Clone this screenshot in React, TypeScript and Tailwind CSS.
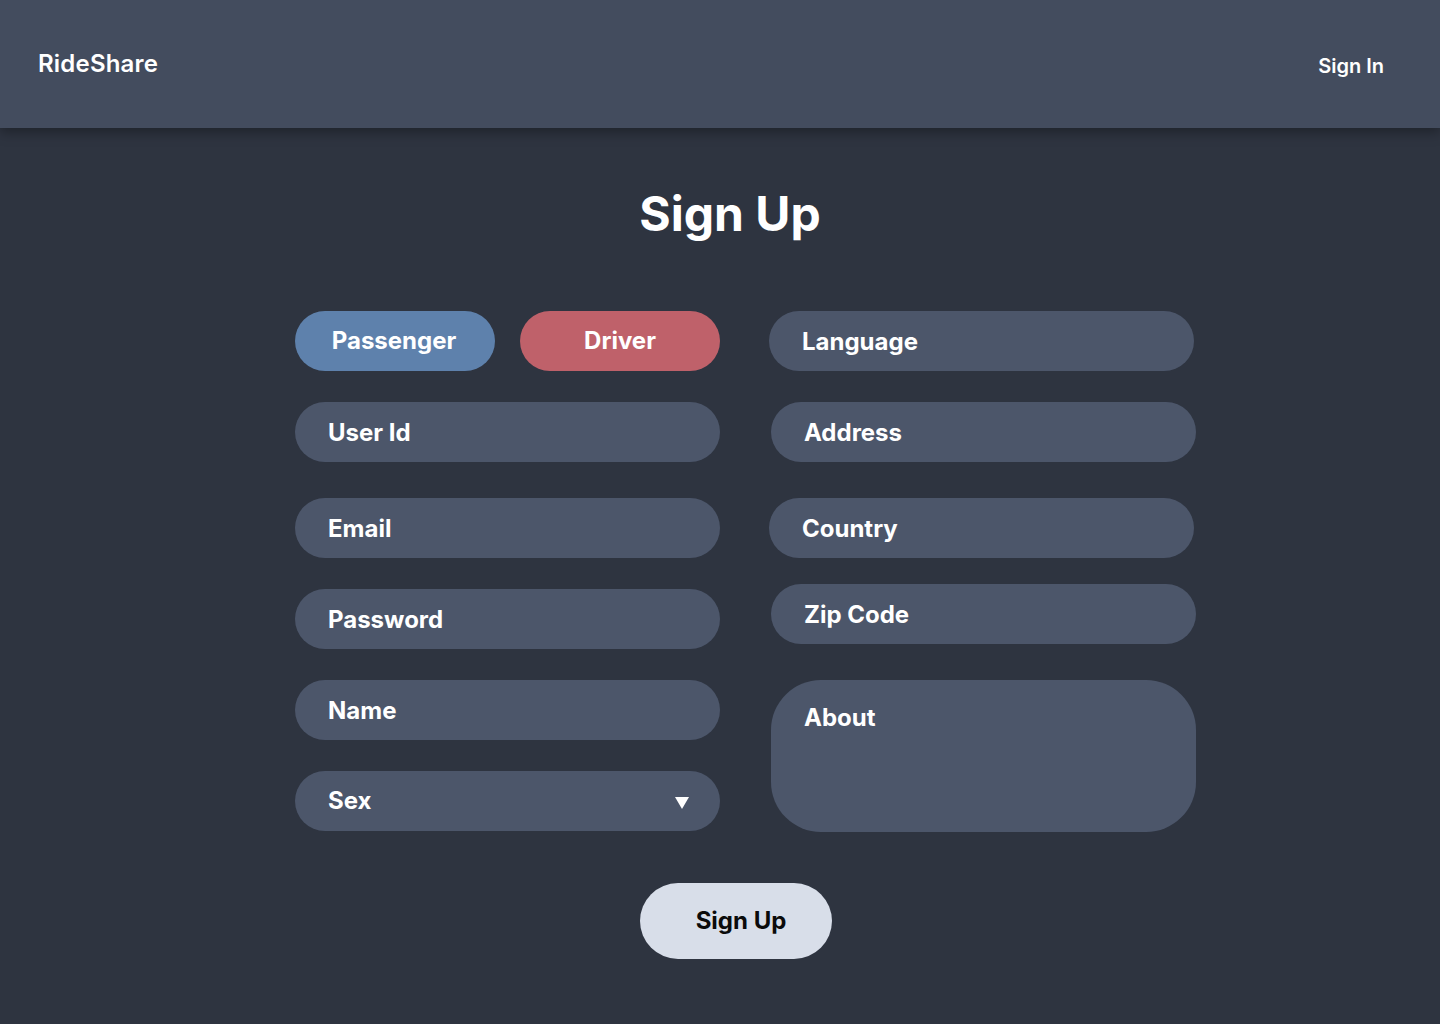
import React from 'react'

const font = { fontFamily: 'Inter, "Noto Sans", sans-serif' }

const Field = ({ label, className = '' }: { label: string; className?: string }) => (
  <input
    placeholder={label}
    className={`h-[60px] w-[425px] rounded-full bg-[#4c566a] pl-[33px] pr-6 text-2xl font-bold text-white placeholder:text-white outline-none ${className}`}
  />
)

const App = () => {
  return (
    <div className="min-h-[1024px] w-full bg-[#2e3440] text-white" style={font}>
      <header className="relative z-10 flex h-[128px] items-center justify-between bg-[#434c5e] pl-[38px] pr-[56px] shadow-[0_4px_12px_rgba(0,0,0,0.35)]">
        <span className="text-2xl font-semibold tracking-[0.2px]">RideShare</span>
        <a className="pt-[3px] text-xl font-semibold">Sign In</a>
      </header>

      <main className="flex flex-col">
        <h1 className="pt-[62px] pl-[20px] text-center text-5xl font-bold">Sign Up</h1>

        <form className="mt-[73px] ml-[295px] flex gap-[49px]">
          {/* left column */}
          <div className="flex flex-col">
            <div className="flex gap-[25px]">
              <button type="button" className="h-[60px] w-[200px] rounded-full bg-[#5e81ac] pr-[2px] text-2xl font-bold">
                Passenger
              </button>
              <button type="button" className="h-[60px] w-[200px] rounded-full bg-[#bf616a] text-2xl font-bold">
                Driver
              </button>
            </div>
            <Field label="User Id" className="mt-[31px]" />
            <Field label="Email" className="mt-[36px]" />
            <Field label="Password" className="mt-[31px]" />
            <Field label="Name" className="mt-[31px]" />
            <div className="mt-[31px] flex h-[60px] w-[425px] items-center justify-between rounded-full bg-[#4c566a] pl-[33px] pr-[31px]">
              <span className="text-2xl font-bold">Sex</span>
              <svg width="14" height="12" viewBox="0 0 14 12" className="mt-[4px]">
                <polygon points="0,0 14,0 7,12" fill="#ffffff" />
              </svg>
            </div>
          </div>

          {/* right column */}
          <div className="flex flex-col">
            <Field label="Language" />
            <Field label="Address" className="mt-[31px] ml-[2px]" />
            <Field label="Country" className="mt-[36px]" />
            <Field label="Zip Code" className="mt-[26px] ml-[2px]" />
            <textarea
              placeholder="About"
              className="mt-[36px] ml-[2px] h-[152px] w-[425px] resize-none rounded-[50px] bg-[#4c566a] pl-[33px] pr-6 pt-[22px] text-2xl leading-[32px] font-bold text-white placeholder:text-white outline-none"
            />
          </div>
        </form>

        <div className="mt-[51px] flex justify-center pl-[32px]">
          <button type="button" className="h-[76px] w-[192px] rounded-full bg-[#d8dee9] pl-[10px] text-2xl font-bold text-[#0b0b0b]">
            Sign Up
          </button>
        </div>
      </main>
    </div>
  )
}

export default App
